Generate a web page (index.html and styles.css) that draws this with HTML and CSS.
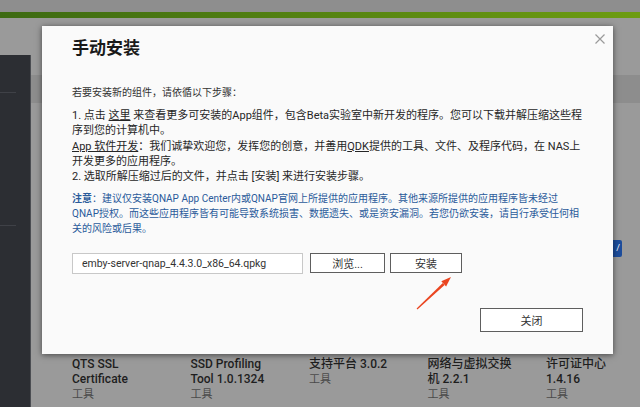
FILE: index.html
```html
<!DOCTYPE html>
<html lang="zh-CN">
<head>
  <meta charset="UTF-8" />
  <title>手动安装</title>
  <link rel="stylesheet" href="styles.css">
</head>
<body>
  <div class="topbar"></div>
  <div class="greenbar"></div>

  <div class="workspace">
    <div class="sidebar">
      <div class="side-line"></div>
      <div class="side-line"></div>
    </div>
    <div class="panel">
      <div class="band"></div>
      <div class="toolbar"><span class="blue-btn">/</span></div>
      <div class="apps">
        <div class="app"><div class="app-name">QTS SSL Certificate</div><div class="app-type">工具</div></div>
        <div class="app"><div class="app-name">SSD Profiling Tool 1.0.1324</div><div class="app-type">工具</div></div>
        <div class="app"><div class="app-name">支持平台 3.0.2</div><div class="app-type">工具</div></div>
        <div class="app"><div class="app-name">网络与虚拟交换机 2.2.1</div><div class="app-type">工具</div></div>
        <div class="app"><div class="app-name">许可证中心 1.4.16</div><div class="app-type">工具</div></div>
      </div>
    </div>
  </div>

  <div class="modal">
    <button class="close-x">
      <svg width="10" height="10" viewBox="0 0 10 10"><path d="M0.5 0.5 L9.5 9.5 M9.5 0.5 L0.5 9.5" stroke="#9a9a9a" stroke-width="1.2" fill="none"/></svg>
    </button>
    <h2>手动安装</h2>
    <p class="intro">若要安装新的组件，请依循以下步骤：</p>
    <p class="steps">1. 点击 <u>这里</u> 来查看更多可安装的App组件，包含Beta实验室中新开发的程序。您可以下载并解压缩这些程序到您的计算机中。<br><u>App 软件开发</u>：我们诚挚欢迎您，发挥您的创意，并善用<u>QDK</u>提供的工具、文件、及程序代码，在 NAS上开发更多的应用程序。<br>2. 选取所解压缩过后的文件，并点击 [安装] 来进行安装步骤。</p>
    <p class="notice"><b>注意</b>：建议仅安装QNAP App Center内或QNAP官网上所提供的应用程序。其他来源所提供的应用程序皆未经过QNAP授权。而这些应用程序皆有可能导致系统损害、数据遗失、或是资安漏洞。若您仍欲安装，请自行承受任何相关的风险或后果。</p>

    <div class="file-row">
      <input class="file-name" type="text" value="emby-server-qnap_4.4.3.0_x86_64.qpkg">
      <button class="btn browse">浏览...</button>
      <button class="btn install">安装</button>
    </div>

    <!-- 标注箭头 -->
    <svg class="arrow" width="38" height="38" viewBox="0 0 38 38">
      <polygon points="1.6,34.6 2.4,35.4 29.6,10.9 27.8,9" fill="#ea4520"/>
      <polygon points="36,3 31.1,12.4 26.3,7.3" fill="#ea4520"/>
    </svg>

    <div class="footer">
      <button class="btn close-btn">关闭</button>
    </div>
  </div>
</body>
</html>
```

FILE: styles.css
```css
body {
  margin: 0;
  width: 640px;
  height: 407px;
  overflow: hidden;
  position: relative;
  display: flex;
  flex-direction: column;
  background-color: #9a9a9a;
  font-family: Roboto, "Noto Sans CJK SC", sans-serif;
}

.topbar {
  height: 12px;
  background-color: #8e8e8e;
}

.greenbar {
  height: 6px;
  background: linear-gradient(to right, #3d6a12, #6d9c12);
}

.workspace {
  flex: 1;
  display: flex;
}

.sidebar {
  flex: none;
  width: 30px;
  margin-top: 37px;
  padding-top: 37px;
  background-color: #2c2e33;
  border-right: 1px solid #4b4d52;
}

.side-line {
  width: 16px;
  height: 1px;
  background-color: #3f4147;
  margin-bottom: 132px;
}

.panel {
  flex: 1;
  min-width: 0;
}

.band {
  margin-top: 57px;
  height: 28px;
  background-color: #8d8d8d;
}

.toolbar {
  display: flex;
  justify-content: flex-end;
  margin-top: 137px;
  padding-right: 18px;
}

.blue-btn {
  width: 40px;
  height: 17px;
  background-color: #1d4d9c;
  border-radius: 2px;
  color: #fff;
  font-size: 9px;
  line-height: 17px;
  text-align: right;
  padding-right: 2px;
  box-sizing: border-box;
}

.apps {
  display: grid;
  grid-template-columns: repeat(5, 118.5px);
  padding-left: 41px;
  margin-top: 100px;
}

.app-name {
  width: 90px;
  font-size: 12px;
  font-weight: 500;
  line-height: 15px;
  color: #1e1e1e;
}

.app-type {
  font-size: 11px;
  line-height: 15px;
  color: #4a4a4a;
}

/* 弹出窗口 */
.modal {
  position: absolute;
  left: 42px;
  top: 26px;
  width: 571px;
  height: 328px;
  box-sizing: border-box;
  padding: 0 30px;
  background-color: #fafafa;
  box-shadow: 0 1px 6px rgba(0, 0, 0, 0.55);
}

.close-x {
  position: absolute;
  top: 8px;
  right: 8px;
  width: 10px;
  height: 10px;
  padding: 0;
  border: none;
  background: none;
  display: flex;
}

.modal h2 {
  margin: 10px 0 0;
  font-size: 17px;
  line-height: 24px;
  font-weight: bold;
  color: #1a1a1a;
}

.intro {
  margin: 25px 0 0;
  font-size: 10px;
  line-height: 15px;
  color: #333;
}

.steps {
  margin: 8px 0 0;
  font-size: 11px;
  line-height: 15.25px;
  color: #262626;
}

.notice {
  margin: 7px 0 0;
  font-size: 10px;
  line-height: 15px;
  color: #2a5a9a;
}

.notice b {
  font-weight: 600;
}

.file-row {
  display: flex;
  align-items: flex-start;
  margin-top: 17px;
}

.file-name {
  width: 231px;
  height: 21px;
  box-sizing: border-box;
  margin: 0;
  padding: 0 9px;
  border: 1px solid #c8c8c8;
  background-color: #fff;
  font-family: Roboto, sans-serif;
  font-size: 10.5px;
  color: #333;
}

.btn {
  height: 20px;
  padding: 0;
  border: 1px solid #5e5e5e;
  background-color: #fff;
  font-family: Roboto, "Noto Sans CJK SC", sans-serif;
  font-size: 11px;
  color: #333;
}

.browse {
  width: 75px;
  margin-left: 7px;
}

.install {
  width: 72px;
  margin-left: 5px;
}

.arrow {
  position: absolute;
  left: 373px;
  top: 248px;
}

.footer {
  display: flex;
  justify-content: flex-end;
  margin-top: 34px;
}

.close-btn {
  width: 103px;
  height: 24px;
}
```
